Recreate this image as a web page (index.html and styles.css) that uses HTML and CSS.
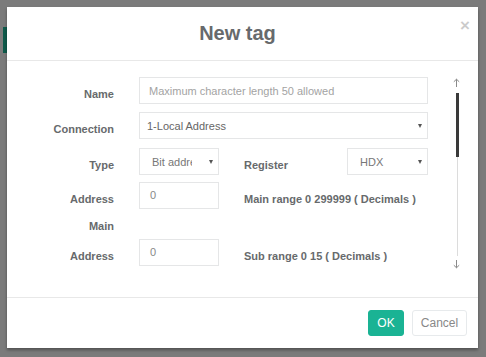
FILE: index.html
```html
<!DOCTYPE html>
<html>
<head>
<meta charset="utf-8">
<link rel="stylesheet" href="styles.css">
</head>
<body>
<div class="page-behind">
  <span class="behind-tab"></span>
</div>
<div class="modal">
  <div class="modal-header">
    <h4 class="modal-title">New tag</h4>
    <span class="close">×</span>
  </div>
  <div class="modal-body">
    <div class="form">
      <div class="row">
        <label class="label">Name</label>
        <div class="input input-full placeholder">Maximum character length 50 allowed</div>
      </div>
      <div class="row">
        <label class="label">Connection</label>
        <div class="select input-full select-wide"><span class="select-text">1-Local Address</span><span class="caret"></span></div>
      </div>
      <div class="row row-short">
        <label class="label">Type</label>
        <div class="select"><span class="select-text">Bit address</span><span class="caret"></span></div>
        <span class="label-inline">Register</span>
        <div class="select"><span class="select-text">HDX</span><span class="caret"></span></div>
      </div>
      <div class="row">
        <label class="label">Address</label>
        <div class="input value">0</div>
        <span class="hint">Main range 0 299999 ( Decimals )</span>
      </div>
      <div class="row row-main">
        <label class="label">Main</label>
      </div>
      <div class="row">
        <label class="label">Address</label>
        <div class="input value">0</div>
        <span class="hint">Sub range 0 15 ( Decimals )</span>
      </div>
    </div>
    <div class="scrollbar">
      <svg class="arrow" width="7" height="9" viewBox="0 0 7 9"><path d="M3.5 1.2 V9 M0.8 3.8 L3.5 1.2 L6.2 3.8" fill="none" stroke="#8a8a8a" stroke-width="1"/></svg>
      <div class="thumb"></div>
      <div class="track"></div>
      <svg class="arrow" width="7" height="9" viewBox="0 0 7 9"><path d="M3.5 0 V7.8 M0.8 5.2 L3.5 7.8 L6.2 5.2" fill="none" stroke="#8a8a8a" stroke-width="1"/></svg>
    </div>
  </div>
  <div class="modal-footer">
    <button class="btn btn-primary">OK</button>
    <button class="btn btn-white">Cancel</button>
  </div>
</div>
</body>
</html>
```
FILE: styles.css
```css
* { box-sizing: border-box; }
html, body { margin: 0; }
body {
  background: #7b7b7b;
  padding: 7px 8px 9px 7px;
  font-family: "Liberation Sans", Arial, sans-serif;
  color: #676a6c;
  width: 486px;
  height: 357px;
  overflow: hidden;
}
.page-behind {
  position: absolute;
  left: 0; top: 0;
  width: 486px; height: 357px;
}
.behind-tab {
  position: absolute;
  left: 3px; top: 27px;
  width: 4px; height: 26px;
  background: #0f5b4b;
}
.modal {
  position: relative;
  width: 471px;
  height: 341px;
  background: #fff;
  box-shadow: 0 2px 3px rgba(0,0,0,0.35);
  display: flex;
  flex-direction: column;
}
.modal-header {
  height: 54px;
  border-bottom: 1px solid #e8e8e8;
  display: flex;
  align-items: center;
  justify-content: center;
  position: relative;
}
.modal-title {
  margin: 0;
  font-size: 20px;
  font-weight: bold;
  color: #676a6c;
  padding-right: 10px;
}
.close {
  position: absolute;
  right: 8px;
  top: 9px;
  font-size: 17px;
  font-weight: bold;
  color: #000;
  opacity: 0.2;
}
.modal-body {
  height: 236px;
  display: flex;
}
.form {
  width: 443px;
  padding-top: 16px;
  display: flex;
  flex-direction: column;
  gap: 9px;
}
.row {
  display: grid;
  grid-template-columns: 107px 80px 78px 81px;
  column-gap: 25px;
  height: 26px;
}
.row-short { height: 25px; margin-top: 1px; }
.row-main { margin: -8px 0 -6px; height: 27px; }
.label {
  text-align: right;
  font-size: 11px;
  font-weight: bold;
  line-height: 20px;
  padding-top: 7px;
  color: #676a6c;
}
.label-inline, .hint {
  font-size: 11px;
  font-weight: bold;
  line-height: 20px;
  padding-top: 7px;
  color: #676a6c;
  white-space: nowrap;
}
.input, .select {
  border: 1px solid #e5e6e7;
  background: #fff;
  font-size: 11px;
  display: flex;
  align-items: center;
  white-space: nowrap;
  overflow: hidden;
}
.input { padding: 0 9px; }
.input-full { grid-column: 2 / 5; }
.placeholder { color: #a3a3a3; }
.value { color: #888; padding-left: 10px; padding-bottom: 2px; }
.select {
  padding: 0 0 0 12px;
  color: #777;
  position: relative;
}
.select-wide { padding-left: 7px; color: #666; }
.select-text {
  flex: 1;
  overflow: hidden;
  white-space: nowrap;
  margin-right: 17px;
}
.select-wide .select-text { margin-right: 0; }
.caret {
  width: 0; height: 0;
  border-left: 2.5px solid transparent;
  border-right: 2.5px solid transparent;
  border-top: 4px solid #555;
  margin-right: 5px;
  flex: none;
}
.scrollbar {
  width: 13px;
  padding-top: 17px;
  display: flex;
  flex-direction: column;
  align-items: center;
}
.arrow { display: block; flex: none; }
.thumb {
  margin-top: 6px;
  width: 3px;
  height: 64px;
  background: #3a3a3a;
  margin-left: 1px;
}
.track {
  width: 1px;
  height: 99px;
  background: #dcdcdc;
  margin-bottom: 4px;
  margin-left: 1px;
}
.modal-footer {
  flex: 1;
  border-top: 1px solid #e8e8e8;
  display: flex;
  justify-content: flex-end;
  align-items: flex-start;
  padding: 12px 11px 0 0;
  gap: 8px;
}
.btn {
  height: 26px;
  font-family: "Liberation Sans", Arial, sans-serif;
  font-size: 12px;
  border-radius: 3px;
  border: 1px solid transparent;
  padding: 0 10px;
  margin: 0;
}
.btn-primary {
  background: #1ab394;
  border-color: #1ab394;
  color: #fff;
  width: 36px;
  padding: 0;
}
.btn-white {
  background: #fff;
  border-color: #e7eaec;
  color: #888;
  width: 55px;
  padding: 0;
}
```
